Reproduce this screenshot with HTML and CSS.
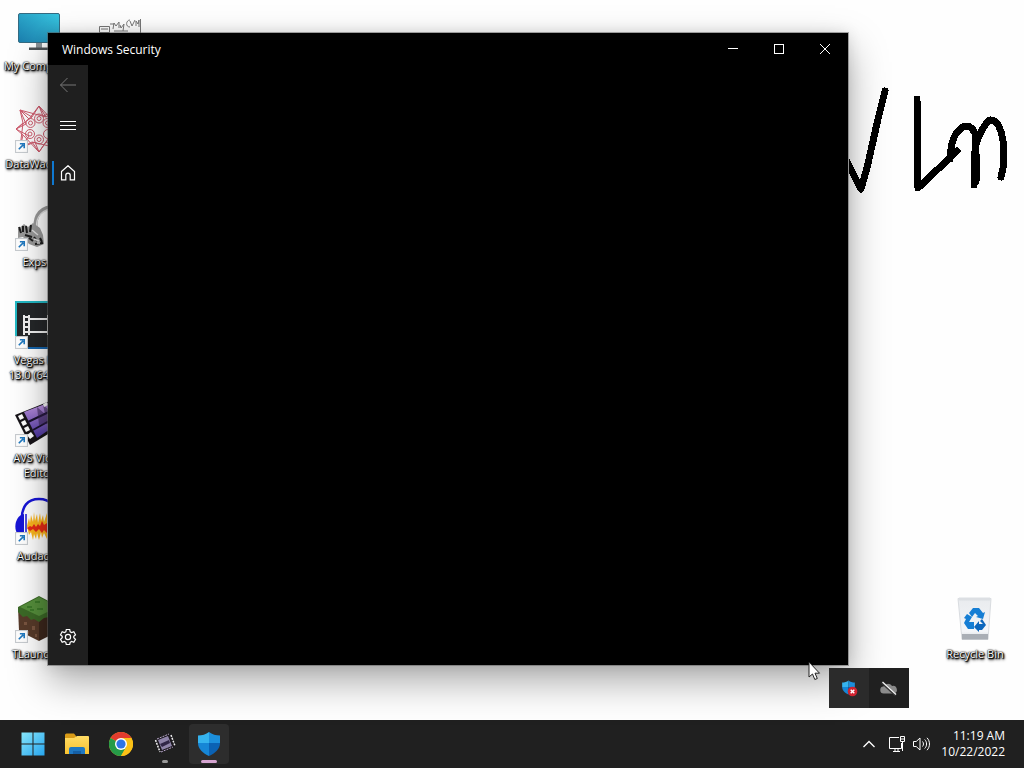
FILE: index.html
```html
<!DOCTYPE html>
<html lang="en">
<head>
<meta charset="utf-8">
<title>Windows Security</title>
<link rel="stylesheet" href="styles.css">
</head>
<body>
<svg class="defs" width="0" height="0" aria-hidden="true">
  <defs>
    <linearGradient id="screen" x1="1" y1="0" x2="0" y2="1"><stop offset="0" stop-color="#38c6e0"/><stop offset="1" stop-color="#1b7fae"/></linearGradient>
    <linearGradient id="win" x1="0" y1="0" x2="1" y2="1"><stop offset="0" stop-color="#86e6fb"/><stop offset="1" stop-color="#27a5ee"/></linearGradient>
    <linearGradient id="folder" x1="0" y1="0" x2="0" y2="1"><stop offset="0" stop-color="#ffdc65"/><stop offset="1" stop-color="#f9c22e"/></linearGradient>
    <linearGradient id="film" x1="0" y1="0" x2="0" y2="1"><stop offset="0" stop-color="#c79ae6"/><stop offset="1" stop-color="#4a35a0"/></linearGradient>
    <linearGradient id="bin" x1="0" y1="0" x2="0" y2="1"><stop offset="0" stop-color="#e9ebee"/><stop offset=".8" stop-color="#f4f6f9"/><stop offset="1" stop-color="#d3d7dc"/></linearGradient>
    <symbol id="shortcut" viewBox="0 0 12 12">
      <rect x=".5" y=".5" width="11" height="11" fill="#fff" stroke="#c8ccd0"/>
      <path d="M3.500 8.500l4-4M4.500 3.500h4v4" fill="none" stroke="#2079c0" stroke-width="1.500"/>
    </symbol>
    <symbol id="shield" viewBox="0 0 24 26">
      <path d="M12 1C9 3.500 5 4.500 1 4.500V12h11z" fill="#35b3ee"/>
      <path d="M12 1c3 2.500 7 3.500 11 3.500V12H12z" fill="#1c8fdc"/>
      <path d="M1 12h11v13C6 22.500 1 18 1 12z" fill="#1686d6"/>
      <path d="M23 12H12v13c6-2.500 11-7 11-13z" fill="#0b62b4"/>
    </symbol>
  </defs>
</svg>

<main class="desktop">
  <svg class="drawing" width="160" height="112" viewBox="0 0 160 112" aria-hidden="true">
    <g fill="none" stroke="#000" stroke-width="7" stroke-linecap="round" stroke-linejoin="round" shape-rendering="crispEdges">
      <path d="M-3 76L12 105L18 84L29 35L36 7"/>
      <path d="M68 15L69 104L108 67"/>
      <path d="M101 75C102 60 104 49 114 43C121 40 125 46 127 52L125 101M127 60C130 50 136 39 141 36C149 35 153 48 154 57L154 84L152 93"/>
      <path d="M126 70v27" stroke-width="9"/>
    </g>
  </svg>

  <nav class="shortcuts" aria-label="Desktop shortcuts">
    <a class="shortcut" href="#computer">
      <svg class="shortcut-art" viewBox="0 0 48 48"><rect x="3.500" y="6.500" width="41" height="29" rx="1.500" fill="url(#screen)" stroke="#356b82"/><path d="M21 36h6v5h-6z" fill="#8c9499"/><path d="M14 40.500h20v2.500H14z" fill="#4c5256"/></svg>
      <span class="label">My Computer</span>
    </a>
    <a class="shortcut" href="#datawac">
      <svg class="shortcut-art" viewBox="0 0 48 48"><g fill="none" stroke="#cf5c6e" stroke-width="1"><path d="M24 1L31 12L43 5L40 18L47 24L40 30L43 43L31 37L24 47L17 37L5 43L8 30L1 24L8 18L5 5L17 12z"/><path d="M24 1L14 14L5 5L11 19L1 24L14 31L5 43L20 37L24 47L33 34L43 43L37 29L47 24L34 17L43 5L28 11z"/><path d="M5 5L31 12M43 5L40 30M43 43L17 37M5 43L8 18M24 1L40 18M47 24L31 37M24 47L8 30M1 24L17 12"/><circle cx="24" cy="13.500" r="4.500"/><circle cx="32.500" cy="18" r="4.500"/><circle cx="33" cy="29" r="4.500"/><circle cx="24" cy="34.500" r="4.500"/><circle cx="15" cy="29" r="4.500"/><circle cx="15.500" cy="18" r="4.500"/><circle cx="24" cy="13.500" r="2"/><circle cx="32.500" cy="18" r="2"/><circle cx="24" cy="34.500" r="2"/><circle cx="15" cy="29" r="2"/><circle cx="15.500" cy="18" r="2"/></g><use href="#shortcut" y="35" width="13" height="13"/></svg>
      <span class="label">DataWackers</span>
    </a>
    <a class="shortcut" href="#exps">
      <svg class="shortcut-art" viewBox="0 0 48 48"><path d="M21 29c-2-12 1-23 15-25" fill="none" stroke="#999" stroke-width="4"/><path d="M22 29c-2-12 2-21 14-23" fill="none" stroke="#e0e0e0" stroke-width="1.500"/><path d="M3 26l6-5 4 3 5-4 7 5 3 7 1 9-7 3-8-3-6-7-5 1z" fill="#999"/><path d="M4 24l2 6M8 23v6M11 23l1 7M16 22l-1 7M10 32l7 2M14 35l4 3M20 41l8-1M19 34l3 4M25 35l2 4" fill="none" stroke="#1e1e1e" stroke-width="2"/><path d="M17 27l6 5M19 36l5 2M22 40h3" stroke="#ddd" stroke-width="1.500"/><use href="#shortcut" y="35" width="13" height="13"/></svg>
      <span class="label">Exps 1</span>
    </a>
    <a class="shortcut" href="#vegas">
      <svg class="shortcut-art" viewBox="0 0 48 48"><rect x="1" y="1" width="46" height="46" fill="#252729" stroke="#22b8c4" stroke-width="2"/><path d="M12 47h35" stroke="#1565ad" stroke-width="2"/><path d="M9 14v20M14 14v20M9 16h5M9 21h5M9 26h5M9 31h5M14 18h19M14 31h19M33 14v20" fill="none" stroke="#f1f1f1" stroke-width="2"/><use href="#shortcut" y="35" width="13" height="13"/></svg>
      <span class="label">Vegas Pro<br>13.0 (64-bit)</span>
    </a>
    <a class="shortcut" href="#avs">
      <svg class="shortcut-art" viewBox="0 0 48 48"><path d="M0 16L40 0L48 26L15 46z" fill="#171419"/><path d="M9 13L38 2L44 24L22 39z" fill="url(#film)"/><path d="M13 23l25-12M18 31l25-14" stroke="#19122d" stroke-width="2"/><path d="M22 8l8 7-2-9 10 8v10l-14 2z" fill="#342052" opacity=".55"/><path d="M3 17l4-2 2 4-4 2zM6 23l4-2 2 4-4 2zM9 29l4-2 2 4-4 2zM12 36l4-3 3 4-4 3zM28 5l4-2 1 3-4 2z" fill="#fff"/><use href="#shortcut" y="35" width="13" height="13"/></svg>
      <span class="label">AVS Video Editor</span>
    </a>
    <a class="shortcut" href="#audacity">
      <svg class="shortcut-art" viewBox="0 0 48 48"><path d="M7 24C6 9 13 2 24 2s18 7 17 22" fill="none" stroke="#1714d6" stroke-width="2.500"/><path d="M9 17v24C-2 39-2 23 6 18z" fill="#1714d6"/><path d="M11 17v22" stroke="#1714d6" stroke-width="1.500"/><path d="M12 29l2-8 1 5 1-8 2 7 1-10 1 9 2-7 1 9 2-10 1 8 2-6 1 7 3-9v26l-3-6-2 5-1-6-2 8-2-7-1 6-2-5-1 6-2-8-2 3z" fill="#fbb51c"/><path d="M12 31l3-2 2 1 2-3 2 3 2-3 2 2 2-5 2 4 3-2v10l-3-3-2 3-3-4-3 3-3-3-3 2z" fill="#e62b16"/><use href="#shortcut" y="35" width="13" height="13"/></svg>
      <span class="label">Audacity</span>
    </a>
    <a class="shortcut" href="#tlauncher">
      <svg class="shortcut-art" viewBox="0 0 48 48"><path d="M3 12l21 11v23L4 36z" fill="#573a29"/><path d="M45 12L24 23v23l20-10z" fill="#3d281d"/><path d="M24 1l21 11-2 7-5-1-4 4-5 1-5 4-5-3-3 1-4-4-4 1-5-5V12z" fill="#3c6a27"/><path d="M24 2l19 10-19 9-19-9z" fill="#568f3c"/><path d="M9 27h3v3H9zM17 31h3v4h-3zM11 36h3v3h-3zM20 39h2v3h-2z" fill="#7a5540"/><path d="M12 12h5M20 7h5M22 14h6M15 15h4" stroke="#3d7a2a" stroke-width="2"/><use href="#shortcut" y="35" width="13" height="13"/></svg>
      <span class="label">TLauncher</span>
    </a>
    <a class="shortcut" href="#sketch" aria-label="Sketch">
      <svg class="shortcut-art" viewBox="0 0 48 48"><g fill="none" stroke="#777" stroke-width="1"><path d="M4.500 19.500h10v6h-10zM6 22h7M18 22l1-6 2 3 3-4v6M25 18l1 3 3-4-1 7M35 13c-4 0-5 7 0 7M35 14l2 5 3-6M41 19v-5l2 3 1-4v7M45.500 12v14M15 17h4M19 24h14"/></g></svg>
    </a>
  </nav>

  <a class="shortcut recycle" href="#recycle">
    <svg class="shortcut-art" viewBox="0 0 48 48"><path d="M7 3.500h33l-3 41H11z" fill="url(#bin)" stroke="#d9dce0"/><path d="M8 2.500h31l1 3H7z" fill="#dcdfe3"/><path d="M11 39h26v5.500H11z" fill="#a9aeb5"/><g fill="#167ed4"><path d="M18 18l4-5h6l4 5 2-1-2 7-7-2 2-1-3-3-3 4z"/><path d="M16 19l5 3-3 5h5v7h-6l-4-6 2-4-2-1z"/><path d="M31 24l4 6-4 5h-3v2l-5-5 5-6v3h4l-3-3z" fill="#0d67bd"/></g></svg>
    <span class="label">Recycle Bin</span>
  </a>

  <section class="window" aria-label="Windows Security">
    <header class="titlebar">
      <h1 class="title">Windows Security</h1>
      <button class="caption" aria-label="Minimize"><svg width="12" height="12" viewBox="0 0 12 12"><path d="M1 5.500h10"/></svg></button>
      <button class="caption" aria-label="Maximize"><svg width="12" height="12" viewBox="0 0 12 12"><rect x="1.500" y="1.500" width="9" height="9"/></svg></button>
      <button class="caption" aria-label="Close"><svg width="12" height="12" viewBox="0 0 12 12"><path d="M1 1l10 10M11 1L1 11"/></svg></button>
    </header>
    <nav class="sidebar" aria-label="Sections">
      <button class="side" aria-label="Back" disabled><svg width="18" height="16" viewBox="0 0 18 16"><path d="M17 8H1.500M8.500 1L1.500 8l7 7"/></svg></button>
      <button class="side" aria-label="Menu"><svg width="18" height="16" viewBox="0 0 18 16"><path d="M1 4.500h16M1 8.500h16M1 12.500h16"/></svg></button>
      <button class="side home" aria-label="Home"><svg width="16" height="16" viewBox="0 0 16 16"><path d="M1.500 6.500L8 .7l6.500 5.800v8.300h-4.300v-4.500a2.200 2.200 0 0 0-4.400 0v4.500H1.500z" stroke-width="1.200"/></svg></button>
      <button class="side settings" aria-label="Settings"><svg width="18" height="18" viewBox="0 0 18 18"><path d="M7.300 1.500h3.400l.5 2.300 1.400.8 2.200-.8 1.700 3-1.700 1.500v1.500l1.700 1.500-1.700 3-2.200-.8-1.400.8-.5 2.200H7.300l-.5-2.200-1.400-.8-2.200.8-1.700-3 1.700-1.500V8.300L1.500 6.800l1.700-3 2.200.8 1.400-.8z" stroke-width="1.200"/><circle cx="9" cy="9" r="2.600" stroke-width="1.200"/></svg></button>
    </nav>
  </section>

  <aside class="tray-popup" aria-label="Hidden icons">
    <button class="tray-item hover" aria-label="Windows Security: action needed"><svg width="18" height="18" viewBox="0 0 18 18"><use href="#shield" x="1" y="1" width="15" height="15"/><circle cx="12.500" cy="12.500" r="4.800" fill="#d02330"/><path d="M10.700 10.700l3.600 3.600M14.300 10.700l-3.600 3.600" stroke="#fff" stroke-width="1.400"/></svg></button>
    <button class="tray-item" aria-label="OneDrive: not signed in"><svg width="18" height="18" viewBox="0 0 18 18"><path d="M4 14.500a3.500 3.500 0 0 1-.5-7A5 5 0 0 1 12 7a3.800 3.800 0 0 1 2 7.500z" fill="#8a8a8a"/><path d="M2 3.500l14 13" stroke="#333" stroke-width="2.400"/><path d="M2.500 3l13.500 12.500" stroke="#f5f5f5" stroke-width="1.300"/></svg></button>
  </aside>

  <svg class="cursor" width="13" height="20" viewBox="0 0 13 20" aria-hidden="true"><path d="M1 1v15l3.500-3 2.300 5.500 2.500-1-2.300-5.300H11.500z" fill="#fff" stroke="#222"/></svg>
</main>

<footer class="taskbar">
  <nav class="apps" aria-label="Taskbar">
    <button class="app" aria-label="Start"><svg width="24" height="24" viewBox="0 0 24 24"><path d="M.5.500h11v11H.5zM12.500.500h11v11h-11zM.5 12.500h11v11H.5zM12.500 12.500h11v11h-11z" fill="url(#win)"/></svg></button>
    <button class="app" aria-label="File Explorer"><svg width="26" height="24" viewBox="0 0 26 24"><path d="M1 3a1.500 1.500 0 0 1 1.500-1.500H10L12 4v4H1z" fill="#d99b17"/><path d="M1 6h9l3-2h11a1 1 0 0 1 1 1v17H1z" fill="url(#folder)"/><path d="M5 22v-5a2 2 0 0 1 2-2h12a2 2 0 0 1 2 2v5z" fill="#1f78c2"/><path d="M9 19h8v3H9z" fill="#155fa5"/></svg></button>
    <button class="app" aria-label="Google Chrome"><svg width="24" height="24" viewBox="0 0 24 24"><circle cx="12" cy="12" r="12" fill="#fbc116"/><path d="M12 12L1.600 6A12 12 0 0 1 22.400 6z" fill="#e33b2e"/><path d="M1.600 6A12 12 0 0 0 12 24l5.200-9L12 12z" fill="#269b48"/><path d="M12 6h10.400a12 12 0 0 1-10.400 18l5.200-9z" fill="#fbc116"/><circle cx="12" cy="12" r="6" fill="#fff"/><circle cx="12" cy="12" r="4.600" fill="#2e75e6"/></svg></button>
    <button class="app running" aria-label="AVS Video Editor"><svg width="24" height="24" viewBox="0 0 24 24"><path d="M2 8L18 2l4 13L7 21z" fill="#1b181e"/><path d="M5 8l10-4 4 10L9 18z" fill="#8f84a9"/><path d="M7 12l9-4 1 3-8 4z" fill="#302646"/><path d="M2.500 8l4.500 12M18 3l4 11" stroke="#eee" stroke-width="1.500" stroke-dasharray="2 1"/><path d="M4 7l12-5M8 20l12-5" stroke="#b9a7ca" stroke-dasharray="2 1"/></svg></button>
    <button class="app active" aria-label="Windows Security"><svg width="24" height="26" viewBox="0 0 24 26"><use href="#shield" width="24" height="26"/></svg></button>
  </nav>
  <div class="system">
    <button class="sys chevron" aria-label="Show hidden icons"><svg width="14" height="8" viewBox="0 0 14 8"><path d="M1.500 7L7 1.500 12.500 7" stroke-width="1.300"/></svg></button>
    <button class="sys" aria-label="Network"><svg width="18" height="18" viewBox="0 0 18 18"><path d="M11 2.500H1.500v11h12V8M5 16.500h7M7 14v2M10 14v2"/><path d="M12.500 1.500h4v5h-4zM14.500 7v9M12.500 4h4"/></svg></button>
    <button class="sys" aria-label="Volume"><svg width="18" height="16" viewBox="0 0 18 16"><path d="M1.500 5.500h2.700L8 2v12l-3.800-3.500H1.500zM10.500 5.500c1.300 1.500 1.300 3.500 0 5M12.700 3.500c2.500 2.500 2.500 6.500 0 9M15 1.800c3.300 3.400 3.300 9 0 12.400"/></svg></button>
    <button class="clock"><span>11:19 AM</span><span>10/22/2022</span></button>
  </div>
</footer>
</body>
</html>
```
FILE: styles.css
```css
* { box-sizing: border-box; }

body {
  margin: 0;
  height: 100vh;
  display: flex;
  flex-direction: column;
  overflow: hidden;
  background: #fefefe;
  color: #fff;
  font: 12px/16px "Open Sans", "Noto Sans", sans-serif;
}

button {
  display: flex;
  align-items: center;
  justify-content: center;
  padding: 0;
  border: 0;
  background: none;
  color: inherit;
  font: inherit;
}

.defs { position: absolute; }

/* Desktop */
.desktop {
  position: relative;
  flex: 1;
  min-height: 0;
  display: flex;
  justify-content: space-between;
  padding: 0 11px 0 1px;
}

.drawing {
  position: absolute;
  top: 84px;
  right: 15px;
}

.shortcuts {
  display: grid;
  grid-auto-flow: column;
  grid-template-rows: repeat(7, 98px);
  grid-auto-columns: 76px;
  column-gap: 4px;
}

.shortcut {
  display: flex;
  flex-direction: column;
  align-items: center;
  gap: 3px;
  width: 76px;
  height: 98px;
  padding-top: 7px;
  color: #fff;
  text-decoration: none;
}

.shortcut-art {
  width: 48px;
  height: 48px;
  flex: none;
}

.label {
  font-size: 11px;
  font-weight: 500;
  line-height: 15px;
  text-align: center;
  white-space: normal;
  text-shadow: 0 0 1px #000, 0 0 2px #000, 1px 1px 1px #000, 1px 1px 2px #000, 1px 2px 3px #000;
}

.recycle {
  align-self: flex-end;
  margin-bottom: 34px;
}

/* Application window */
.window {
  position: absolute;
  inset: 33px 176px 55px 48px;
  display: flex;
  flex-direction: column;
  background: #000;
  box-shadow: 0 0 0 1px rgba(90, 90, 90, .5), 0 16px 36px rgba(0, 0, 0, .34), 0 0 14px rgba(0, 0, 0, .12);
}

.titlebar {
  display: flex;
  height: 32px;
  align-items: center;
}

.title {
  flex: 1;
  margin: 0;
  padding: 2px 0 0 14px;
  font-size: 12px;
  font-weight: 400;
}

.caption {
  width: 46px;
  height: 32px;
}

.caption svg, .side svg, .sys svg {
  fill: none;
  stroke: #fff;
}

.sidebar {
  flex: 1;
  display: flex;
  flex-direction: column;
  width: 40px;
  padding-bottom: 8px;
  background: #1f1f1f;
}

.side {
  width: 40px;
  height: 40px;
}

.side:disabled svg { stroke: #777; }

.home {
  position: relative;
  margin-top: 8px;
}

.home::before {
  content: "";
  position: absolute;
  left: 4px;
  top: 8px;
  width: 2px;
  height: 24px;
  background: #0f78d0;
}

.settings { margin-top: auto; }

/* Overflow tray */
.tray-popup {
  position: absolute;
  right: 115px;
  bottom: 12px;
  display: flex;
  background: #202020;
}

.tray-item {
  width: 40px;
  height: 40px;
}

.hover { background: #2b2b2b; }

.cursor {
  position: absolute;
  right: 203px;
  bottom: 39px;
}

/* Taskbar */
.taskbar {
  display: flex;
  justify-content: space-between;
  align-items: center;
  height: 48px;
  padding: 0 19px 0 13px;
  background: #202020;
}

.apps {
  display: flex;
  gap: 4px;
}

.app {
  position: relative;
  width: 40px;
  height: 40px;
  border-radius: 4px;
}

.active { background: #2d2d2d; }

.running::after, .active::after {
  content: "";
  position: absolute;
  bottom: 1px;
  width: 6px;
  height: 3px;
  border-radius: 2px;
  background: #999;
}

.active::after {
  width: 16px;
  background: #d6a5d1;
}

.system {
  display: flex;
  align-items: center;
}

.sys {
  width: 24px;
  height: 40px;
}

.chevron { width: 32px; }

.clock {
  flex-direction: column;
  align-items: flex-end;
  margin-left: 8px;
}
```
